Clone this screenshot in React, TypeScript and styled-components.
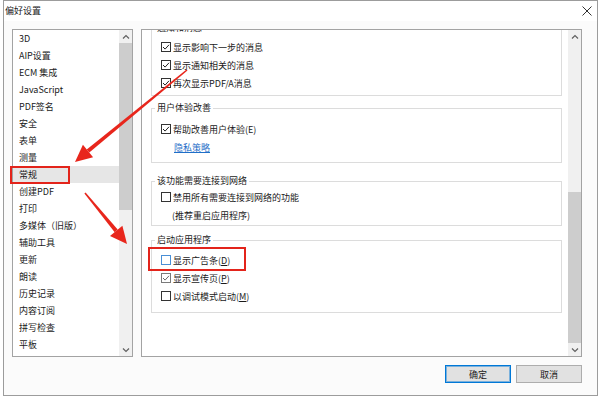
import React, { useLayoutEffect, useRef } from "react";
import styled, { createGlobalStyle } from "styled-components";

const GlobalStyle = createGlobalStyle`
  html, body { margin: 0; padding: 0; background: #ffffff; }
  body {
    font-family: "Noto Sans CJK SC", "Noto Sans", sans-serif;
    font-size: 9px;
    color: #1a1a1a;
  }
  #root { width: 600px; height: 397px; position: relative; overflow: hidden; }
`;

const Page = styled.div`
  position: relative;
  width: 600px;
  height: 397px;
`;

const Window = styled.div`
  margin-left: 3px;
  width: 595px;
  height: 396px;
  box-sizing: border-box;
  border: 1px solid #9c9c9c;
  background: #fbfbfb;
  display: flex;
  flex-direction: column;
`;

const TitleBar = styled.div`
  height: 20px;
  display: flex;
  align-items: center;
  justify-content: space-between;
  padding: 0 5px 0 1px;
  background: #ffffff;
`;

const Title = styled.span`
  font-size: 9px;
  line-height: 12px;
  color: #1a1a1a;
`;

const Body = styled.div`
  flex: 1;
  display: flex;
  flex-direction: column;
  padding: 8px 15px 0 8px;
`;

const Panels = styled.div`
  display: flex;
  gap: 8px;
  height: 328px;
`;

const ListPanel = styled.div`
  width: 121px;
  box-sizing: border-box;
  border: 1px solid #a3a3a3;
  background: #ffffff;
  display: flex;
  overflow: hidden;
`;

const ListBody = styled.div`
  flex: 1;
  display: flex;
  flex-direction: column;
  overflow: hidden;
`;

const ListItem = styled.div<{ $selected?: boolean }>`
  flex: none;
  height: 17px;
  line-height: 17px;
  padding-left: 6px;
  white-space: nowrap;
  background: ${(p) => (p.$selected ? "#e6e6e6" : "transparent")};
`;

const ContentPanel = styled.div`
  flex: 1;
  box-sizing: border-box;
  border: 1px solid #a3a3a3;
  background: #ffffff;
  display: flex;
  overflow: hidden;
`;

const ScrollArea = styled.div`
  flex: 1;
  overflow: hidden;
`;

const ScrollContent = styled.div`
  padding: 8px 6px 60px 9px;
  display: flex;
  flex-direction: column;
`;

const Group = styled.fieldset<{ $mt: number; $pt: number; $pb: number }>`
  margin: ${(p) => p.$mt}px 0 0 0;
  padding: ${(p) => p.$pt}px 0 ${(p) => p.$pb}px 0;
  border: 1px solid #dcdcdc;
  min-width: 0;
`;

const Legend = styled.legend`
  font-size: 9px;
  line-height: 12px;
  padding: 0 2px;
  margin-left: 3px;
  color: #1a1a1a;
`;

const Row = styled.div<{ $indent: number }>`
  height: 18px;
  display: flex;
  align-items: center;
  gap: 2px;
  padding-left: ${(p) => p.$indent}px;
  white-space: nowrap;
`;

const Box = styled.span<{ $focus?: boolean; $dim?: boolean }>`
  width: 10px;
  height: 10px;
  box-sizing: border-box;
  border: 1px solid ${(p) => (p.$focus ? "#4a8fd6" : p.$dim ? "#7a7a7a" : "#333333")};
  background: #ffffff;
  display: flex;
  align-items: center;
  justify-content: center;
  flex: none;
`;

const Link = styled.span`
  color: #1f6fc8;
  text-decoration: underline;
`;

const Scrollbar = styled.div`
  width: 13px;
  flex: none;
  background: #f0f0f0;
  display: flex;
  flex-direction: column;
`;

const ArrowBtn = styled.div`
  height: 13px;
  flex: none;
  display: flex;
  align-items: center;
  justify-content: center;
`;

const Spacer = styled.div<{ $h: number }>`
  height: ${(p) => p.$h}px;
  flex: none;
`;

const Thumb = styled.div<{ $h: number }>`
  height: ${(p) => p.$h}px;
  flex: none;
  background: #cdcdcd;
`;

const Filler = styled.div`
  flex: 1;
`;

const ButtonRow = styled.div`
  margin-top: 8px;
  display: flex;
  justify-content: flex-end;
  gap: 5px;
`;

const Button = styled.button<{ $default?: boolean }>`
  width: 66px;
  height: 18px;
  box-sizing: border-box;
  margin: 0;
  padding: 0;
  font-family: inherit;
  font-size: 9px;
  color: #1a1a1a;
  background: #e1e1e1;
  border: 1px solid ${(p) => (p.$default ? "#0078d7" : "#adadad")};
  box-shadow: ${(p) => (p.$default ? "inset 0 0 0 1px rgba(0,120,215,0.45)" : "none")};
`;

const Overlay = styled.svg`
  position: absolute;
  left: 0;
  top: 0;
  width: 600px;
  height: 397px;
  pointer-events: none;
`;

const Highlight = styled.div<{ $x: number; $y: number; $w: number; $h: number }>`
  position: absolute;
  left: ${(p) => p.$x}px;
  top: ${(p) => p.$y}px;
  width: ${(p) => p.$w}px;
  height: ${(p) => p.$h}px;
  box-sizing: border-box;
  border: 2px solid #e3241b;
  pointer-events: none;
`;

const Chevron = ({ up }: { up?: boolean }) => (
  <svg width="8" height="6" viewBox="0 0 8 6">
    <polyline
      points={up ? "1,4.5 4,1.5 7,4.5" : "1,1.5 4,4.5 7,1.5"}
      fill="none"
      stroke="#606060"
      strokeWidth="1.2"
    />
  </svg>
);

const CloseIcon = () => (
  <svg width="10" height="10" viewBox="0 0 10 10">
    <path d="M0.5 0.5 L9.5 9.5 M9.5 0.5 L0.5 9.5" stroke="#333" strokeWidth="1" />
  </svg>
);

const ScrollBarView = ({ before, thumb }: { before: number; thumb: number }) => (
  <Scrollbar>
    <ArrowBtn>
      <Chevron up />
    </ArrowBtn>
    <Spacer $h={before} />
    <Thumb $h={thumb} />
    <Filler />
    <ArrowBtn>
      <Chevron />
    </ArrowBtn>
  </Scrollbar>
);

const Check = ({
  checked,
  focus,
  dim,
  children,
}: {
  checked?: boolean;
  focus?: boolean;
  dim?: boolean;
  children: React.ReactNode;
}) => (
  <Row $indent={9}>
    <Box $focus={focus} $dim={dim}>
      {checked && (
        <svg width="8" height="8" viewBox="0 0 8 8">
          <polyline
            points="1,4 3.1,6.1 7,1.8"
            fill="none"
            stroke={dim ? "#6a6a6a" : "#222"}
            strokeWidth="1"
          />
        </svg>
      )}
    </Box>
    <span>{children}</span>
  </Row>
);

const categories = [
  "3D",
  "AIP设置",
  "ECM 集成",
  "JavaScript",
  "PDF签名",
  "安全",
  "表单",
  "测量",
  "常规",
  "创建PDF",
  "打印",
  "多媒体（旧版）",
  "辅助工具",
  "更新",
  "朗读",
  "历史记录",
  "内容订阅",
  "拼写检查",
  "平板",
  "签名",
];

export default function App() {
  const scrollRef = useRef<HTMLDivElement>(null);
  useLayoutEffect(() => {
    if (scrollRef.current) scrollRef.current.scrollTop = 16;
  }, []);

  return (
    <Page>
      <GlobalStyle />
      <Window>
        <TitleBar>
          <Title>偏好设置</Title>
          <CloseIcon />
        </TitleBar>
        <Body>
          <Panels>
            <ListPanel>
              <ListBody>
                {categories.map((c) => (
                  <ListItem key={c} $selected={c === "常规"}>
                    {c}
                  </ListItem>
                ))}
              </ListBody>
              <ScrollBarView before={0} thumb={167} />
            </ListPanel>
            <ContentPanel>
              <ScrollArea ref={scrollRef}>
                <ScrollContent>
                  <Group $mt={0} $pt={4} $pb={3}>
                    <Legend>通知和消息</Legend>
                    <Check checked>显示影响下一步的消息</Check>
                    <Check checked>显示通知相关的消息</Check>
                    <Check checked>再次显示PDF/A消息</Check>
                  </Group>
                  <Group $mt={6} $pt={6} $pb={6}>
                    <Legend>用户体验改善</Legend>
                    <Check checked>帮助改善用户体验(E)</Check>
                    <Row $indent={22}>
                      <Link>隐私策略</Link>
                    </Row>
                  </Group>
                  <Group $mt={12} $pt={1} $pb={1}>
                    <Legend>该功能需要连接到网络</Legend>
                    <Check>禁用所有需要连接到网络的功能</Check>
                    <Row $indent={20}>(推荐重启应用程序)</Row>
                  </Group>
                  <Group $mt={8} $pt={5} $pb={7}>
                    <Legend>启动应用程序</Legend>
                    <Check focus>
                      显示广告条(<u>D</u>)
                    </Check>
                    <Check checked dim>
                      显示宣传页(<u>P</u>)
                    </Check>
                    <Check>
                      以调试模式启动(<u>M</u>)
                    </Check>
                  </Group>
                </ScrollContent>
              </ScrollArea>
              <ScrollBarView before={149} thumb={151} />
            </ContentPanel>
          </Panels>
          <ButtonRow>
            <Button $default>确定</Button>
            <Button>取消</Button>
          </ButtonRow>
        </Body>
      </Window>

      <Highlight $x={10} $y={166} $w={60} $h={18} />
      <Highlight $x={148} $y={247} $w={98} $h={24} />

      <Overlay viewBox="0 0 600 397">
        <polygon
          points="187.5,70.6 186.5,69.4 86.7,149.5 89.3,152.5"
          fill="#e8261c"
        />
        <polygon points="75,162 93.1,157.2 82.9,144.8" fill="#e8261c" />
        <polygon
          points="84.4,193.5 85.6,192.5 117.7,229.6 114.7,232.2"
          fill="#e8261c"
        />
        <polygon points="127,244 110,236 122.4,225.8" fill="#e8261c" />
      </Overlay>
    </Page>
  );
}
